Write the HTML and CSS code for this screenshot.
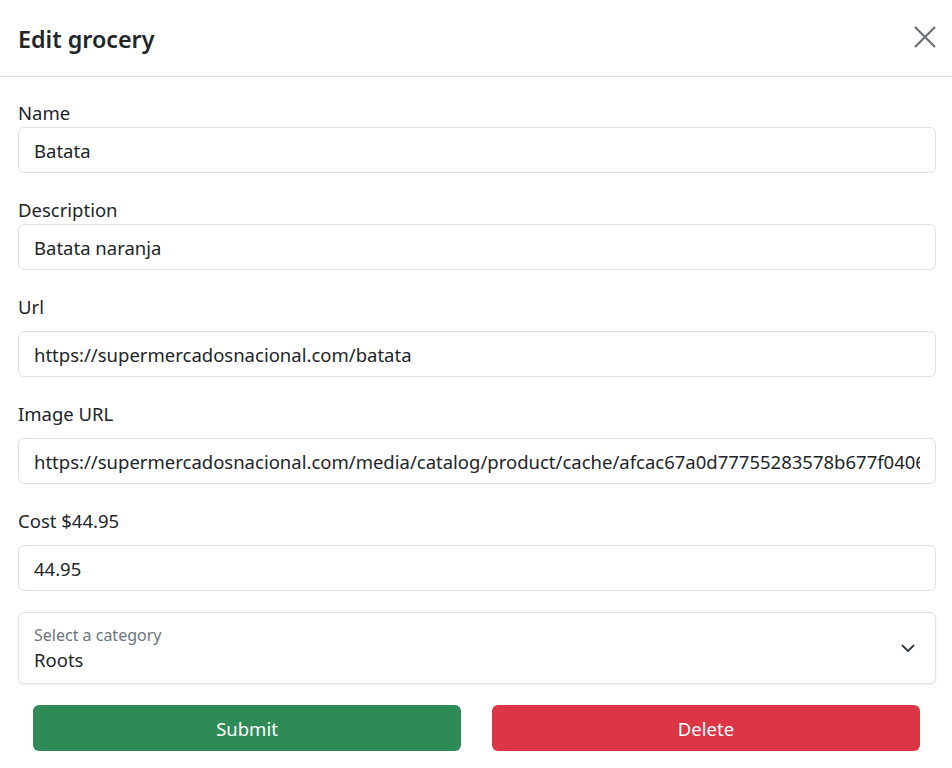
FILE: index.html
```html
<!DOCTYPE html>
<html lang="en">
<head>
<meta charset="utf-8">
<title>Edit grocery</title>
<link rel="stylesheet" href="styles.css">
</head>
<body>
<div class="modal">
  <div class="modal-header">
    <h5 class="modal-title">Edit grocery</h5>
    <button class="btn-close" type="button" aria-label="Close">
      <svg width="22" height="22" viewBox="0 0 22 22"><path d="M1 1 L21 21 M21 1 L1 21" stroke="#6b6e71" stroke-width="2.2" fill="none"/></svg>
    </button>
  </div>
  <form class="modal-body">
    <div class="group">
      <label class="form-label">Name</label>
      <input class="form-control" type="text" value="Batata">
    </div>
    <div class="group">
      <label class="form-label">Description</label>
      <input class="form-control" type="text" value="Batata naranja">
    </div>
    <div class="group">
      <label class="form-label spaced">Url</label>
      <input class="form-control" type="text" value="https://supermercadosnacional.com/batata">
    </div>
    <div class="group">
      <label class="form-label spaced">Image URL</label>
      <input class="form-control" type="text" value="https://supermercadosnacional.com/media/catalog/product/cache/afcac67a0d77755283578b677f04063a/b/a/batata.jpg">
    </div>
    <div class="group group-last">
      <label class="form-label spaced">Cost $44.95</label>
      <input class="form-control" type="text" value="44.95">
    </div>
    <div class="form-floating">
      <div class="floating-label">Select a category</div>
      <div class="floating-value">Roots</div>
      <svg class="chevron" width="14" height="9" viewBox="0 0 14 9"><path d="M1.5 1.5 L7 7 L12.5 1.5" stroke="#343a40" stroke-width="1.8" fill="none" stroke-linecap="round" stroke-linejoin="round"/></svg>
    </div>
    <div class="actions">
      <button class="btn btn-success" type="button">Submit</button>
      <button class="btn btn-danger" type="button">Delete</button>
    </div>
  </form>
</div>
</body>
</html>
```
FILE: styles.css
```css
* { box-sizing: border-box; }
html, body { margin: 0; padding: 0; background: #fff; }
body {
  font-family: "Noto Sans", "Open Sans", sans-serif;
  color: #212529;
  width: 952px;
  height: 768px;
  overflow: hidden;
}
.modal {
  width: 952px;
  background: #fff;
}
.modal-header {
  height: 77px;
  border-bottom: 1px solid #dee2e6;
  display: flex;
  align-items: center;
  justify-content: space-between;
  padding: 3px 15px 0 18px;
}
.modal-title {
  margin: 0;
  font-size: 23.3px;
  font-weight: 600;
  line-height: 1.2;
}
.btn-close {
  border: 0;
  background: transparent;
  padding: 0;
  width: 24px;
  height: 24px;
  display: flex;
  align-items: center;
  justify-content: center;
  margin-top: -5px;
}
.modal-body {
  padding: 23px 16px 0 18px;
  display: flex;
  flex-direction: column;
}
.group {
  display: flex;
  flex-direction: column;
  margin-bottom: 24px;
}
.group-last { margin-bottom: 21px; }
.form-label {
  font-size: 18.5px;
  line-height: 27px;
  height: 27px;
  margin-top: -1px;
  margin-bottom: 1px;
}
.form-label.spaced { margin-bottom: 11px; }
.form-control {
  height: 46px;
  border: 1px solid #dee2e6;
  border-radius: 6px;
  padding: 1px 15px 0;
  font-family: inherit;
  font-size: 18.5px;
  color: #212529;
  background: #fff;
  width: 100%;
  outline: none;
}
.form-floating {
  position: relative;
  height: 72px;
  border: 1px solid #dee2e6;
  border-radius: 6px;
  box-shadow: 0 1px 3px rgba(0,0,0,0.08);
  padding: 11px 15px 0 15px;
}
.floating-label {
  font-size: 16px;
  line-height: 22px;
  color: #6c757d;
}
.floating-value {
  font-size: 18.5px;
  line-height: 27px;
}
.chevron {
  position: absolute;
  right: 20px;
  top: 31px;
}
.actions {
  display: flex;
  gap: 31px;
  padding: 21px 16px 0 15px;
}
.btn {
  flex: 1;
  height: 46px;
  border: 0;
  border-radius: 6px;
  color: #fff;
  font-family: inherit;
  font-size: 18.5px;
  font-weight: 400;
}
.btn-success { background: #2e8b57; }
.btn-danger { background: #dc3545; }
```
